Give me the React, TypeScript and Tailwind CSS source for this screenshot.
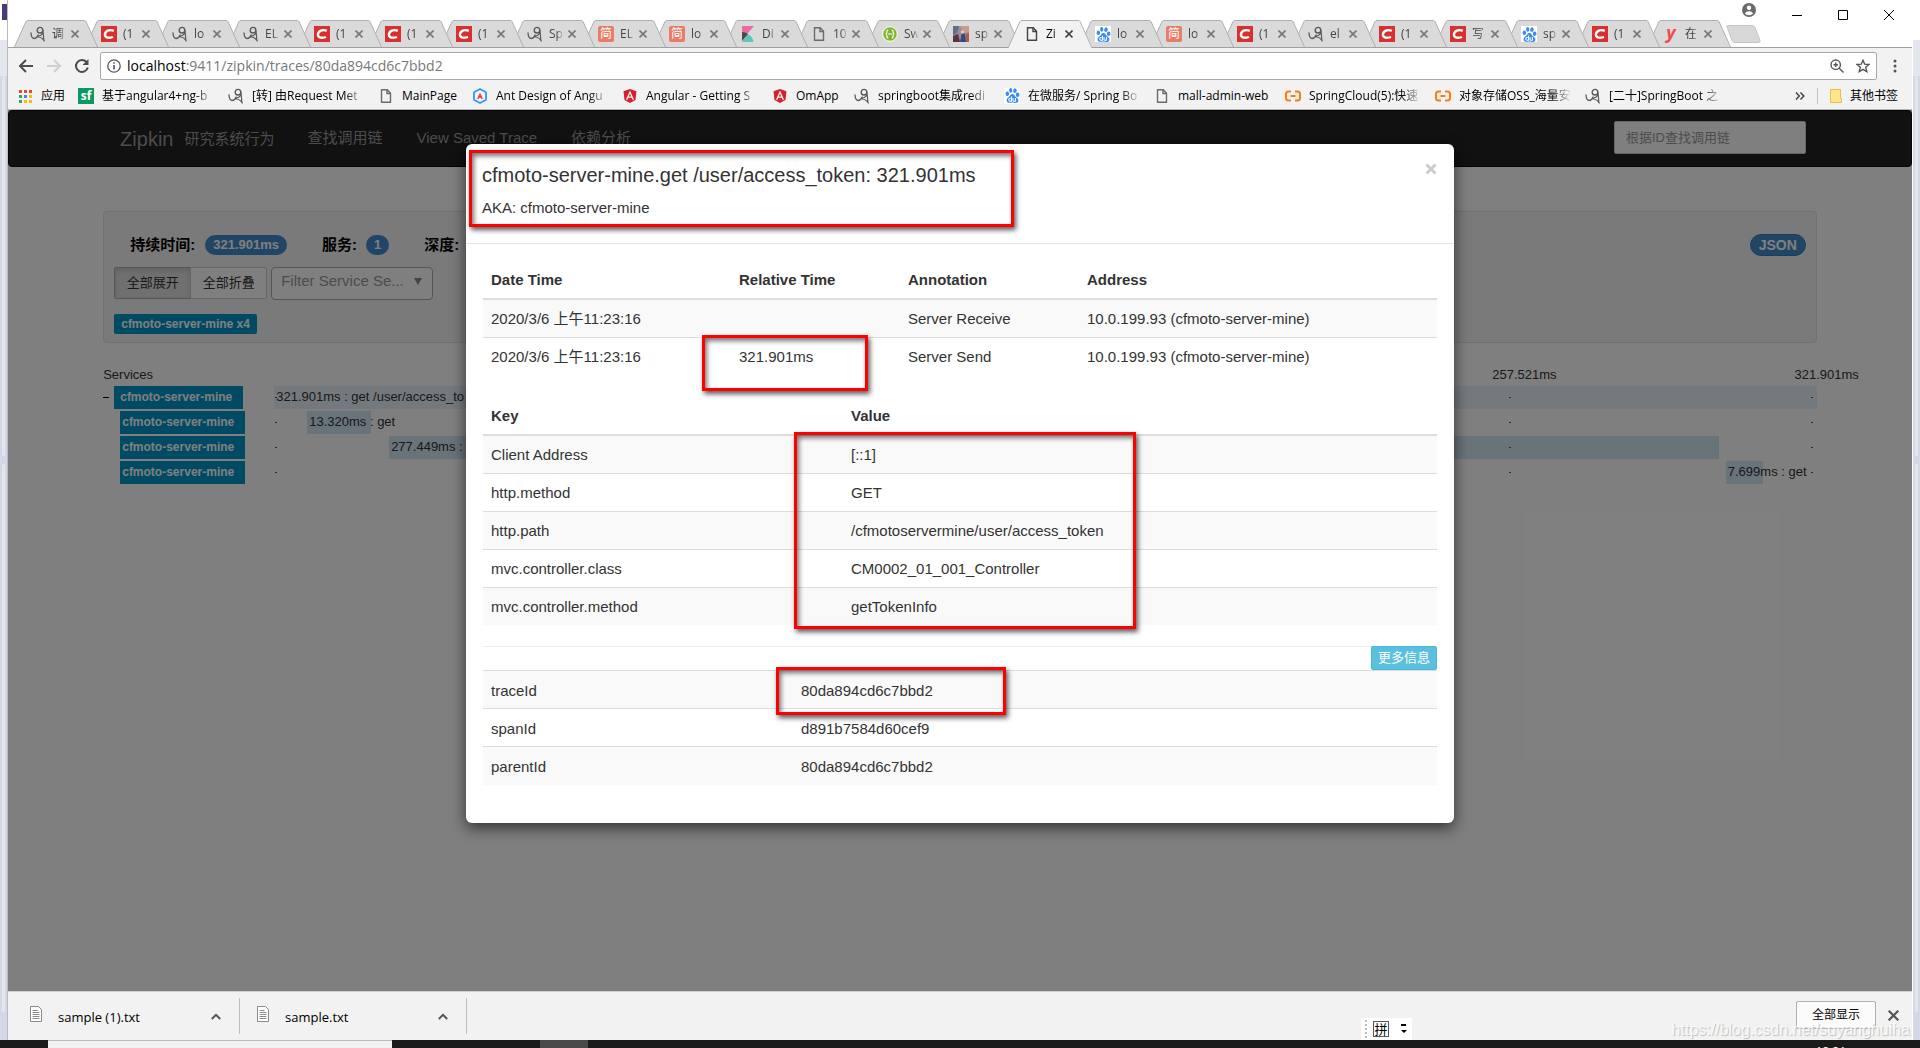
import type { ReactNode } from "react";
import { FaAngular } from "react-icons/fa";
import { SiBaidu } from "react-icons/si";

const uiFont = "font-['Open_Sans','Noto_Sans_CJK_SC',sans-serif]";
const pageFont = "font-['Liberation_Sans','Noto_Sans_CJK_SC',sans-serif]";

/* ---------- favicons ---------- */

const BlogIcon = () => (
  <svg viewBox="0 0 16 16" className="w-4 h-4" fill="none" stroke="#5a5a5a" strokeLinecap="round">
    <path d="M1 7c.2 3.500 1.500 5.500 3.300 5.500 1.700 0 3-1.700 3.800-3.500" strokeWidth="1.300" />
    <circle cx="10" cy="4.200" r="2.800" strokeWidth="1.400" />
    <path d="M12.800 4.200c.5 3-1 5.300-4.700 5.800-1 .2-1 .9.200 1 2.800.2 4.700 1.800 6 4M12.800 4c.6 3 .8 7 1 10.500" strokeWidth="1.200" />
  </svg>
);

const CsdnIcon = () => (
  <svg viewBox="0 0 16 16" className="w-4 h-4">
    <rect width="16" height="16" fill="#d8302f" />
    <path d="M12.800 4.800c-1.500-.7-3.500-.9-5.200-.4C5.200 5.100 4 6.600 3.900 8.500c-.1 2.100 1.800 3.200 4.400 3.200 1.200 0 2.500-.2 3.700-.7" fill="none" stroke="#fff" strokeWidth="2.400" />
  </svg>
);

const JianIcon = () => (
  <span className="w-4 h-4 rounded-xs bg-[#ea7b66] text-white text-[12px] leading-4 text-center">简</span>
);

const KibanaIcon = () => (
  <svg viewBox="0 0 16 16" className="w-4 h-4">
    <path d="M2 0h12L2 14z" fill="#ee6aa7" />
    <path d="M2 6c3 0 5 1 6 2.200L2 15z" fill="#4a4a4a" />
    <path d="M8 8c3 1.500 5 4.500 5.500 8H2z" fill="#5cc8bd" />
  </svg>
);

const DocIcon = ({ color = "#6b6b6b" }: { color?: string }) => (
  <svg viewBox="0 0 16 16" className="w-4 h-4" fill="none" stroke={color} strokeWidth="1.400">
    <path d="M3.500 1.700h5.800l3.200 3.500v9.100h-9z" />
    <path d="M9 1.700v3.800h3.500" />
  </svg>
);

const SwaggerIcon = () => (
  <svg viewBox="0 0 16 16" className="w-4 h-4" fill="none" stroke="#fff">
    <circle cx="8" cy="8" r="7.400" fill="#7fb52c" />
    <circle cx="8" cy="8" r="6.800" stroke="#c6e29a" strokeWidth=".6" />
    <path d="M6.300 4.200c-1.300 0-1.400.6-1.300 1.600 0 1.200 0 1.900-1.200 2.200 1.200.3 1.200 1 1.200 2.200-.1 1 0 1.600 1.300 1.600M9.700 4.200c1.300 0 1.400.6 1.300 1.600 0 1.200 0 1.900 1.200 2.200-1.200.3-1.200 1-1.200 2.200.1 1 0 1.600-1.300 1.600M6 8h4" strokeWidth="1.200" />
  </svg>
);

const PhotoIcon = () => (
  <svg viewBox="0 0 16 16" className="w-4 h-4">
    <rect width="16" height="16" fill="#9c8a96" />
    <path d="M0 0h6L4 7 0 9z" fill="#5d6e8c" />
    <path d="M7 0h9v6l-5 1z" fill="#c79a8c" />
    <path d="M0 10l5-2 2 8H0z" fill="#5b3441" />
    <path d="M9 6l3 2 1 8H7z" fill="#2f4a86" />
    <circle cx="9.500" cy="6" r="1.800" fill="#e8c9a8" />
    <path d="M13 8l3-1v9h-3z" fill="#b65a45" />
  </svg>
);

const BaiduIcon = () => (
  <span className="w-4 h-4 bg-white flex items-center justify-center">
    <SiBaidu className="w-[15px] h-[15px] text-[#3b8bf5]" />
  </span>
);

const YIcon = () => (
  <span className="w-4 text-center text-[18px] leading-4 font-bold italic text-[#ef4c4c] -mt-0.5">y</span>
);

const AliyunIcon = () => (
  <svg viewBox="0 0 16 16" className="w-4 h-4" fill="none" stroke="#ff7a0e" strokeWidth="2">
    <path d="M6 3.500H3.500Q1 3.500 1 6v4q0 2.500 2.500 2.500H6M10 3.500h2.500Q15 3.500 15 6v4q0 2.500-2.500 2.500H10M5.500 8h5" />
  </svg>
);

const AngularIcon = () => <FaAngular className="w-4 h-4 text-[#d6202f]" />;

const AntIcon = () => (
  <svg viewBox="0 0 16 16" className="w-4 h-4">
    <path d="M8 1l6 3.300v7.400L8 15l-6-3.300V4.300z" fill="none" stroke="#2e97ff" strokeWidth="1.800" strokeLinejoin="round" />
    <path d="M8 4.500l3 6.500H9.800L8 9.500 6.200 11H5z" fill="#f0404c" />
  </svg>
);

const SfIcon = () => (
  <span className="w-4 h-4 bg-[#0a9a61] text-white text-[12px] leading-[15px] font-bold text-center">sf</span>
);

const AppsIcon = () => (
  <svg viewBox="0 0 16 16" className="w-4 h-4">
    {["#ea4335", "#ea4335", "#ea4335", "#34a853", "#4285f4", "#fbbc05", "#34a853", "#fbbc05", "#fbbc05"].map((fill, i) => (
      <rect key={i} x={2 + (i % 3) * 5} y={2 + Math.floor(i / 3) * 5} width="3" height="3" fill={fill} />
    ))}
  </svg>
);

const CloseIcon = ({ className = "w-2 h-2" }: { className?: string }) => (
  <svg viewBox="0 0 8 8" className={className} fill="none" stroke="currentColor" strokeWidth="1.600">
    <path d="M.5.5l7 7M7.500.5l-7 7" />
  </svg>
);

/* ---------- browser chrome ---------- */

const tabs: { icon: ReactNode; title: string; active?: boolean }[] = [
  { icon: <BlogIcon />, title: "调" },
  { icon: <CsdnIcon />, title: "(1" },
  { icon: <BlogIcon />, title: "lo" },
  { icon: <BlogIcon />, title: "EL" },
  { icon: <CsdnIcon />, title: "(1" },
  { icon: <CsdnIcon />, title: "(1" },
  { icon: <CsdnIcon />, title: "(1" },
  { icon: <BlogIcon />, title: "Sp" },
  { icon: <JianIcon />, title: "EL" },
  { icon: <JianIcon />, title: "lo" },
  { icon: <KibanaIcon />, title: "Di" },
  { icon: <DocIcon />, title: "10" },
  { icon: <SwaggerIcon />, title: "Sw" },
  { icon: <PhotoIcon />, title: "sp" },
  { icon: <DocIcon color="#444" />, title: "Zi", active: true },
  { icon: <BaiduIcon />, title: "lo" },
  { icon: <JianIcon />, title: "lo" },
  { icon: <CsdnIcon />, title: "(1" },
  { icon: <BlogIcon />, title: "el" },
  { icon: <CsdnIcon />, title: "(1" },
  { icon: <CsdnIcon />, title: "写" },
  { icon: <BaiduIcon />, title: "sp" },
  { icon: <CsdnIcon />, title: "(1" },
  { icon: <YIcon />, title: "在" },
];

const long = "w-[113px] [mask-image:linear-gradient(90deg,#000_82%,transparent)]";

const bookmarks: { icon: ReactNode; title: string; width: string }[] = [
  { icon: <AppsIcon />, title: "应用", width: "w-6" },
  { icon: <SfIcon />, title: "基于angular4+ng-b", width: long },
  { icon: <BlogIcon />, title: "[转] 由Request Met", width: long },
  { icon: <DocIcon />, title: "MainPage", width: "w-[57px]" },
  { icon: <AntIcon />, title: "Ant Design of Angu", width: long },
  { icon: <AngularIcon />, title: "Angular - Getting S", width: long },
  { icon: <AngularIcon />, title: "OmApp", width: "w-[45px]" },
  { icon: <BlogIcon />, title: "springboot集成redi", width: long },
  { icon: <BaiduIcon />, title: "在微服务/ Spring Bo", width: long },
  { icon: <DocIcon />, title: "mall-admin-web", width: "w-[94px]" },
  { icon: <AliyunIcon />, title: "SpringCloud(5):快速", width: long },
  { icon: <AliyunIcon />, title: "对象存储OSS_海量安", width: long },
  { icon: <BlogIcon />, title: "[二十]SpringBoot 之", width: long },
];

const TabStrip = () => (
  <div className="relative flex h-12 items-end bg-white border-b border-[#a0a0a0] pl-[6px]">
    {tabs.map((tab, i) => (
      <div
        key={i}
        className="relative flex h-7 w-[84px] -mr-[13px] shrink-0 items-center pl-4 top-px"
        style={{ zIndex: tab.active ? 40 : tabs.length - i }}
      >
        <svg viewBox="0 0 84 28" className="absolute inset-0 w-full h-full">
          <path
            d="M0 28L12 1.500Q12.500.5 14 .5H70Q71.500.5 72 1.500L84 28"
            fill={tab.active ? "#f2f2f2" : "#dadada"}
            stroke="#b0b0b0"
          />
          {!tab.active && <path d="M0 27.500H84" stroke="#a0a0a0" />}
        </svg>
        <span className="relative flex w-4 h-4">{tab.icon}</span>
        <span className={`relative ml-[6px] w-[15px] whitespace-nowrap text-[12px] leading-4 [mask-image:linear-gradient(90deg,#000_50%,transparent)] ${tab.active ? "text-black" : "text-[#444]"}`}>
          {tab.title}
        </span>
        <button aria-label="关闭标签页" className={`relative ml-1 ${tab.active ? "text-[#444]" : "text-[#777]"}`}>
          <CloseIcon />
        </button>
      </div>
    ))}
    <button aria-label="新标签页" className="ml-2 mb-1">
      <svg viewBox="0 0 36 18" className="w-9 h-[18px]">
        <path d="M1.500.5H26q2 0 3 2l5 13q.5 2-1.500 2H9q-2 0-3-2L1 2Q.5.5 1.500.5z" fill="#d8d8d8" stroke="#c4c4c4" />
      </svg>
    </button>
    <div className="absolute right-[18px] top-0 flex items-start text-black">
      <button aria-label="用户" className="mt-[3px] mr-9">
        <svg viewBox="0 0 14 14" className="w-[14px] h-[14px]">
          <circle cx="7" cy="7" r="7" fill="#6a6a6a" />
          <circle cx="7" cy="4.800" r="2.200" fill="#fff" />
          <path d="M2.800 10.500q1.200-2.300 4.200-2.300t4.200 2.300Q9.500 12.300 7 12.300t-4.200-1.800z" fill="#fff" />
        </svg>
      </button>
      <button aria-label="最小化" className="mr-9 mt-[10px]"><svg viewBox="0 0 10 10" className="w-[10px] h-[10px]"><path d="M0 5.500h10" stroke="#000" /></svg></button>
      <button aria-label="最大化" className="mr-9 mt-[10px]"><svg viewBox="0 0 10 10" className="w-[10px] h-[10px]"><path d="M.5.5h9v9h-9z" stroke="#000" fill="none" /></svg></button>
      <button aria-label="关闭" className="mt-[10px]"><svg viewBox="0 0 10 10" className="w-[10px] h-[10px]"><path d="M0 0l10 10M10 0L0 10" stroke="#000" /></svg></button>
    </div>
  </div>
);

const Toolbar = () => (
  <div className="flex h-9 items-center bg-[#f2f2f2] pl-[10px] pr-[15px]">
    <button aria-label="后退" className="mr-3">
      <svg viewBox="0 0 16 16" className="w-4 h-4" fill="none" stroke="#4d4d4d" strokeWidth="2"><path d="M15 8H2.500M8 2L2 8l6 6" /></svg>
    </button>
    <button aria-label="前进" className="mr-3">
      <svg viewBox="0 0 16 16" className="w-4 h-4" fill="none" stroke="#d0d0d0" strokeWidth="2"><path d="M1 8h12.500M8 2l6 6-6 6" /></svg>
    </button>
    <button aria-label="重新加载" className="mr-[10px]">
      <svg viewBox="0 0 16 16" className="w-4 h-4" fill="none" stroke="#4d4d4d" strokeWidth="2">
        <path d="M13.800 9.500A6 6 0 1 1 12.500 4" />
        <path d="M14.500 1v6h-6z" fill="#4d4d4d" stroke="none" />
      </svg>
    </button>
    <div className="flex h-7 flex-1 items-center rounded-xs border border-[#a8a8a8] bg-white px-[6px]">
      <svg viewBox="0 0 14 14" className="w-[14px] h-[14px]" fill="none" stroke="#555" strokeWidth="1.300">
        <circle cx="7" cy="7" r="6.200" />
        <path d="M7 6v4.500M7 3.300v1.500" strokeWidth="1.600" />
      </svg>
      <div className="ml-[6px] flex-1 text-[14px] leading-5 pb-px text-[#777]">
        <span className="text-black">localhost</span>:9411/zipkin/traces/80da894cd6c7bbd2
      </div>
      <button aria-label="缩放" className="mr-3">
        <svg viewBox="0 0 14 14" className="w-[14px] h-[14px]" fill="none" stroke="#555" strokeWidth="1.400">
          <circle cx="5.700" cy="5.700" r="4.700" /><path d="M9 9l4.500 4.500M3.500 5.700h4.400M5.700 3.500v4.400" />
        </svg>
      </button>
      <button aria-label="收藏">
        <svg viewBox="0 0 14 14" className="w-[14px] h-[14px]" fill="none" stroke="#555" strokeWidth="1.400">
          <path d="M7 1.200l1.700 4 4.300.3-3.300 2.800 1.100 4.300L7 10.300l-3.800 2.300 1.100-4.300L1 5.500l4.300-.3z" />
        </svg>
      </button>
    </div>
    <button aria-label="菜单" className="ml-4">
      <svg viewBox="0 0 4 14" className="w-1 h-[14px]" fill="#555"><circle cx="2" cy="2" r="1.500" /><circle cx="2" cy="7" r="1.500" /><circle cx="2" cy="12" r="1.500" /></svg>
    </button>
  </div>
);

const BookmarkBar = () => (
  <div className="flex h-[26px] items-center bg-[#f2f2f2] border-b border-[#b6b6b6] pl-[9px] pr-[14px] pb-[2px] text-[12px] text-black">
    {bookmarks.map((b, i) => (
      <a key={i} href="#" className="mr-[13px] flex shrink-0 items-center gap-2 whitespace-nowrap">
        <span className="flex w-4 h-4">{b.icon}</span>
        <span className={b.width}>{b.title}</span>
      </a>
    ))}
    <button aria-label="更多书签" className="ml-auto mr-3 text-[#444]">
      <svg viewBox="0 0 10 8" className="w-[10px] h-2" fill="none" stroke="currentColor" strokeWidth="1.500"><path d="M1 .5L4.300 4 1 7.500M5.500.5L8.800 4 5.500 7.500" /></svg>
    </button>
    <span className="h-4 w-px bg-[#c4c4c4] mr-3" />
    <a href="#" className="flex items-center gap-2">
      <svg viewBox="0 0 12 14" className="w-3 h-[14px]"><path d="M.5.5h10v9h1v4H.5z" fill="#ffe48a" stroke="#e8bf45" /></svg>
      其他书签
    </a>
  </div>
);

const DownloadItem = ({ name }: { name: string }) => (
  <div className="flex h-9 w-[210px] items-center border-r border-[#bdbdbd] pr-[18px]">
    <svg viewBox="0 0 12 16" className="w-3 h-4 mb-1" fill="#fff" stroke="#8a8a8a">
      <path d="M.5.5h8l3 3v12H.5z" />
      <path d="M2.500 4.500h5M2.500 6.500h7M2.500 8.500h7M2.500 10.500h7M2.500 12.500h7" />
    </svg>
    <span className="ml-4 flex-1 pt-1 text-[13px] text-black">{name}</span>
    <button aria-label={`${name} 选项`}>
      <svg viewBox="0 0 10 7" className="w-[10px] h-[7px]" fill="none" stroke="#555" strokeWidth="2"><path d="M.8 6L5 1.800 9.200 6" /></svg>
    </button>
  </div>
);

const DownloadBar = () => (
  <div className="relative flex h-[49px] items-center bg-[#f2f2f2] border-t border-[#cfcfcf] pl-[22px] pr-[13px]">
    <div className="flex gap-[17px]">
      <DownloadItem name="sample (1).txt" />
      <DownloadItem name="sample.txt" />
    </div>
    <button className="ml-auto mb-[2px] h-7 w-20 rounded-xs border border-[#b0b0b0] bg-[#fbfbfb] text-[12px] text-black">全部显示</button>
    <button aria-label="关闭下载栏" className="ml-3 mb-[2px] text-[#555]"><CloseIcon className="w-[11px] h-[11px]" /></button>
    <div className="absolute bottom-0 left-[1353px] flex h-[22px] w-[51px] items-center bg-white pl-1 text-black">
      <span className="h-[18px] border-l-2 border-dotted border-[#bbb]" />
      <span className="ml-[6px] h-4 w-4 border border-[#555] text-[13px] leading-[14px] text-center">拼</span>
      <svg viewBox="0 0 6 10" className="ml-3 w-[6px] h-[10px]"><path d="M0 0h5v2H0zM0 6h6L3 9z" /></svg>
    </div>
    <span className="absolute right-[2px] bottom-0 font-['Liberation_Sans',sans-serif] text-[16px] leading-5 text-white/80 [text-shadow:1px_1px_1px_#bbb]">
      https://blog.csdn.net/suyanghuiha
    </span>
  </div>
);

/* ---------- zipkin page ---------- */

const spans = [
  { start: 0, width: 100, text: "321.901ms : get /user/access_to", bar: "bg-[#e8f3fa]" },
  { start: 2.14, width: 4.15, text: "13.320ms : get", bar: "bg-[#d2e6f5]" },
  { start: 7.45, width: 86.2, text: "277.449ms :", bar: "bg-[#d2e6f5]" },
  { start: 94.1, width: 2.39, text: "7.699ms : get", bar: "bg-[#d2e6f5]" },
];

const Badge = ({ children }: { children: ReactNode }) => (
  <span className="inline-block rounded-full bg-[#428bca] px-2 text-[13px] leading-5 font-bold text-white">{children}</span>
);

const Navbar = () => (
  <nav className="h-[57px] rounded border border-[#080808] bg-[#222] text-[15px] text-[#999]">
    <div className="mx-auto flex h-full w-[90%] items-center pl-4 pr-[10px]">
      <a href="#" className="text-[20px]">Zipkin</a>
      <span className="ml-[11px] pt-px">研究系统行为</span>
      <a href="#" className="ml-[33px]">查找调用链</a>
      <a href="#" className="ml-[34px]">View Saved Trace</a>
      <a href="#" className="ml-[34px]">依赖分析</a>
      <input
        aria-label="根据ID查找调用链"
        placeholder="根据ID查找调用链"
        className="ml-auto mb-[2px] h-[33px] w-48 rounded-xs border border-[#ccc] bg-white px-[11px] text-[13px] placeholder:text-[#999]"
      />
    </div>
  </nav>
);

const TracePage = () => (
  <>
    <Navbar />
    <div className="mx-auto mt-11 w-[90%] text-[#333]">
      <section className="h-[132px] rounded border border-[#e3e3e3] bg-[#f5f5f5] px-[10px] pt-[22px]">
        <div className="flex items-center pl-4 text-[15px] leading-[22px] font-bold text-black">
          <span className="mr-[10px]">持续时间:</span><Badge>321.901ms</Badge>
          <span className="ml-[35px] mr-[9px]">服务:</span><Badge>1</Badge>
          <span className="ml-[35px]">深度:</span>
          <button className="ml-auto rounded-full border border-[#357ebd] bg-[#428bca] px-2 text-[14px] leading-5 text-white">JSON</button>
        </div>
        <div className="mt-[11px] flex text-[13px]">
          <button className="h-8 w-[77px] rounded-l-xs border border-[#adadad] bg-[#e0e0e0] shadow-[inset_0_3px_5px_rgba(0,0,0,0.12)]">全部展开</button>
          <button className="-ml-px h-8 w-[77px] rounded-r-xs border border-[#ccc] bg-white">全部折叠</button>
          <button className="ml-1 flex h-[33px] w-[162px] items-center justify-between rounded border border-[#aaa] bg-white pl-[9px] pr-[10px] pb-1 text-[15px] text-[#999]">
            Filter Service Se...
            <span className="h-0 w-0 border-x-4 border-t-[7px] border-x-transparent border-t-[#888]" />
          </button>
        </div>
        <span className="mt-[14px] inline-block rounded-xs bg-[#0095c8] px-[7px] text-[12px] leading-5 font-bold text-white">cfmoto-server-mine x4</span>
      </section>

      <section className="mt-[23px] text-[13px] leading-[18px]">
        <div className="flex">
          <span className="w-[171px]">Services</span>
          <div className="grid flex-1 grid-cols-5">
            <div className="col-start-5 -ml-4 -mr-[42px] flex justify-between"><span>257.521ms</span><span>321.901ms</span></div>
          </div>
        </div>
        {spans.map((s, i) => (
          <div key={i} className="mt-[2px] flex">
            <div className={`flex w-[171px] items-center ${i === 0 ? "" : "pl-[17px]"}`}>
              {i === 0 && <button aria-label="折叠" className="mr-[5px] flex h-[23px] w-[6px] items-center"><span className="h-px w-full bg-black" /></button>}
              <span className={`h-[23px] bg-[#0095c8] text-[12px] leading-[22px] font-bold text-white ${i === 0 ? "w-[129px] pl-[6px]" : "w-[125px] pl-[2px]"}`}>cfmoto-server-mine</span>
            </div>
            <div className="relative h-[23px] flex-1">
              <div className={`h-full ${s.bar}`} style={{ marginLeft: `${s.start}%`, width: `${s.width}%` }}>
                <span className="pl-[2px] leading-[22px] whitespace-nowrap">{s.text}</span>
              </div>
              <div className="absolute inset-0 grid grid-cols-5 items-center">
                {[0, 1, 2, 3, 4].map((n) => (
                  <div key={n} className="flex justify-between pl-px pr-1">
                    <span className="h-px w-[2px] bg-[#555]" />
                    {n === 4 && <span className="h-px w-[2px] bg-[#555]" />}
                  </div>
                ))}
              </div>
            </div>
          </div>
        ))}
      </section>
    </div>
  </>
);

/* ---------- span detail modal ---------- */

const annotations = [
  ["2020/3/6 上午11:23:16", "", "Server Receive", "10.0.199.93 (cfmoto-server-mine)"],
  ["2020/3/6 上午11:23:16", "321.901ms", "Server Send", "10.0.199.93 (cfmoto-server-mine)"],
];

const binaryAnnotations = [
  ["Client Address", "[::1]"],
  ["http.method", "GET"],
  ["http.path", "/cfmotoservermine/user/access_token"],
  ["mvc.controller.class", "CM0002_01_001_Controller"],
  ["mvc.controller.method", "getTokenInfo"],
];

const ids = [
  ["traceId", "80da894cd6c7bbd2"],
  ["spanId", "d891b7584d60cef9"],
  ["parentId", "80da894cd6c7bbd2"],
];

const DetailTable = ({ head, rows, cols }: { head?: string[]; rows: string[][]; cols: string[] }) => (
  <table className="w-full table-fixed text-left">
    <colgroup>{cols.map((c, i) => <col key={i} className={c} />)}</colgroup>
    {head && (
      <thead>
        <tr className="border-b-2 border-[#ddd]">
          {head.map((h) => <th key={h} className="h-[38px] px-2 font-bold">{h}</th>)}
        </tr>
      </thead>
    )}
    <tbody>
      {rows.map((row, i) => (
        <tr key={i} className={`${i % 2 === 0 ? "bg-[#f9f9f9]" : ""} ${i > 0 || !head ? "border-t border-[#ddd]" : ""}`}>
          {row.map((cell, j) => <td key={j} className="h-[38px] px-2 pt-[2px]">{cell}</td>)}
        </tr>
      ))}
    </tbody>
  </table>
);

const Mark = ({ className }: { className: string }) => (
  <div className={`pointer-events-none absolute border-3 border-[#f00] shadow-[2px_3px_5px_rgba(0,0,0,0.65),inset_2px_3px_5px_rgba(0,0,0,0.55)] ${className}`} />
);

const SpanModal = () => (
  <div role="dialog" aria-labelledby="span-title" className="relative mx-auto mt-[34px] w-[988px] rounded-md bg-white text-[15px] leading-[22px] text-[#333] shadow-[0_5px_15px_rgba(0,0,0,0.6)]">
    <div className="flex items-start justify-between border-b border-[#e5e5e5] px-4 pt-[17px] pb-6">
      <div>
        <h4 id="span-title" className="text-[20px] leading-[28px]">cfmoto-server-mine.get /user/access_token: 321.901ms</h4>
        <h5 className="mt-[7px] text-[15px] leading-[23px]">AKA: cfmoto-server-mine</h5>
      </div>
      <button aria-label="关闭" className="mt-[2px] mr-px text-[#ccc]">
        <svg viewBox="0 0 12 12" className="w-3 h-3" fill="none" stroke="currentColor" strokeWidth="3"><path d="M1.500 1.500l9 9M10.500 1.500l-9 9" /></svg>
      </button>
    </div>
    <div className="px-[17px] pt-[17px] pb-[38px]">
      <DetailTable head={["Date Time", "Relative Time", "Annotation", "Address"]} rows={annotations} cols={["w-[248px]", "w-[169px]", "w-[179px]", ""]} />
      <div className="h-[22px]" />
      <DetailTable head={["Key", "Value"]} rows={binaryAnnotations} cols={["w-[360px]", ""]} />
      <div className="mt-[21px] flex justify-end border-t border-[#eee]">
        <button className="-mt-px h-6 w-[66px] rounded-xs border border-[#46b8da] bg-[#5bc0de] text-[13px] leading-[20px] text-white">更多信息</button>
      </div>
      <DetailTable rows={ids} cols={["w-[310px]", ""]} />
    </div>
    <Mark className="left-[3px] top-[6px] h-[77px] w-[545px]" />
    <Mark className="left-[236px] top-[191px] h-14 w-[166px]" />
    <Mark className="left-[328px] top-[288px] h-[197px] w-[342px]" />
    <Mark className="left-[310px] top-[523px] h-12 w-[230px]" />
  </div>
);

/* ---------- desktop behind the window ---------- */

const EdgeStrip = ({ side }: { side: "left" | "right" }) => (
  <div className={`flex w-2 shrink-0 flex-col bg-[#d3d7e8] ${side === "left" ? "border-r border-[#bbb]" : "border-l border-white"}`}>
    <div className="h-10 bg-white pt-1">
      {side === "left" && <div className="ml-[2px] h-4 bg-[#4a3a78]" />}
    </div>
    <div className="h-9 bg-[#e4e6ee]" />
    <div className="mx-[2px] h-[380px] rounded bg-[#e6e6ea]" />
    <div className="mx-[2px] mt-2 mb-7 flex-1 rounded bg-[#e6e6ea]" />
  </div>
);

export default function App() {
  return (
    <div className={`flex min-h-screen flex-col overflow-hidden ${uiFont}`}>
      <div className="flex flex-1">
        <EdgeStrip side="left" />
        <div className="flex min-w-0 flex-1 flex-col">
          <TabStrip />
          <Toolbar />
          <BookmarkBar />
          <main className={`relative flex-1 overflow-hidden bg-white ${pageFont}`}>
            <TracePage />
            <div className="absolute inset-0 bg-black/50" />
            <div className="absolute inset-0"><SpanModal /></div>
          </main>
          <DownloadBar />
        </div>
        <EdgeStrip side="right" />
      </div>
      <footer className="flex h-2 overflow-hidden bg-[#1c1b1b] text-white">
        <div className="ml-12 w-[344px] border-t border-[#bbb] bg-[#f2f2f2]" />
        <div className="ml-[148px] w-12 bg-[#4a4a4a]" />
        <span className="ml-auto mr-[74px] pt-[5px] text-[12px] leading-[14px]">18:21</span>
      </footer>
    </div>
  );
}
